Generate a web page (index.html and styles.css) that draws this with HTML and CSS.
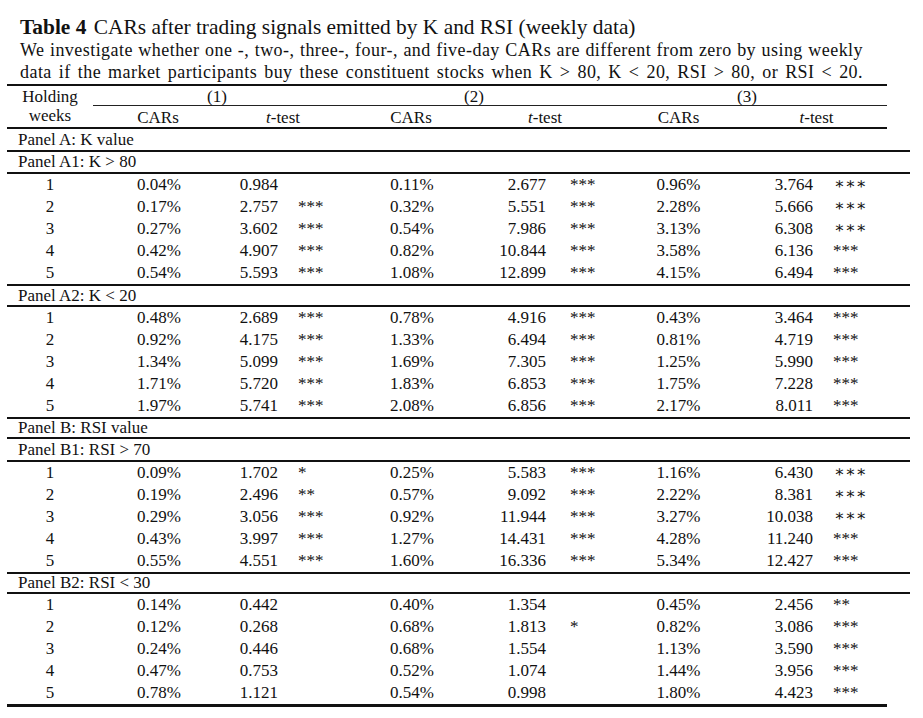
FILE: index.html
```html
<!DOCTYPE html>
<html>
<head>
<meta charset="utf-8">
<link rel="stylesheet" href="styles.css">
</head>
<body>
<div class="page">
  <div class="caption">
    <div class="title"><b class="tnum">Table 4</b> CARs after trading signals emitted by K and RSI (weekly data)</div>
    <div class="desc">We investigate whether one -, two-, three-, four-, and five-day CARs are different from zero by using weekly data if the market participants buy these constituent stocks when K &gt; 80, K &lt; 20, RSI &gt; 80, or RSI &lt; 20.</div>
  </div>

  <div class="table">
    <div class="head">
      <div class="stubhead">Holding<br>weeks</div>
      <div class="groups">
        <div class="g1">(1)</div>
        <div class="g2">(2)</div>
        <div class="g3">(3)</div>
      </div>
      <div class="subs">
        <div class="s1">CARs</div>
        <div class="s2"><i>t</i>-test</div>
        <div class="s3">CARs</div>
        <div class="s4"><i>t</i>-test</div>
        <div class="s5">CARs</div>
        <div class="s6"><i>t</i>-test</div>
      </div>
    </div>

    <div class="panel h21">Panel A: K value</div>
    <div class="panel h20">Panel A1: K &gt; 80</div>
    <div class="group">
      <div class="row"><span>1</span><span>0.04%</span><span class="tv">0.984</span><span class="st"></span><span>0.11%</span><span class="tv">2.677</span><span class="st st2">***</span><span>0.96%</span><span class="tv">3.764</span><span class="st st3"><span class="ast">∗∗∗</span></span></div>
      <div class="row"><span>2</span><span>0.17%</span><span class="tv">2.757</span><span class="st">***</span><span>0.32%</span><span class="tv">5.551</span><span class="st st2">***</span><span>2.28%</span><span class="tv">5.666</span><span class="st st3"><span class="ast">∗∗∗</span></span></div>
      <div class="row"><span>3</span><span>0.27%</span><span class="tv">3.602</span><span class="st">***</span><span>0.54%</span><span class="tv">7.986</span><span class="st st2">***</span><span>3.13%</span><span class="tv">6.308</span><span class="st st3"><span class="ast">∗∗∗</span></span></div>
      <div class="row"><span>4</span><span>0.42%</span><span class="tv">4.907</span><span class="st">***</span><span>0.82%</span><span class="tv">10.844</span><span class="st st2">***</span><span>3.58%</span><span class="tv">6.136</span><span class="st st3">***</span></div>
      <div class="row"><span>5</span><span>0.54%</span><span class="tv">5.593</span><span class="st">***</span><span>1.08%</span><span class="tv">12.899</span><span class="st st2">***</span><span>4.15%</span><span class="tv">6.494</span><span class="st st3">***</span></div>
    </div>
    <div class="panel h19">Panel A2: K &lt; 20</div>
    <div class="group">
      <div class="row"><span>1</span><span>0.48%</span><span class="tv">2.689</span><span class="st">***</span><span>0.78%</span><span class="tv">4.916</span><span class="st st2">***</span><span>0.43%</span><span class="tv">3.464</span><span class="st st3">***</span></div>
      <div class="row"><span>2</span><span>0.92%</span><span class="tv">4.175</span><span class="st">***</span><span>1.33%</span><span class="tv">6.494</span><span class="st st2">***</span><span>0.81%</span><span class="tv">4.719</span><span class="st st3">***</span></div>
      <div class="row"><span>3</span><span>1.34%</span><span class="tv">5.099</span><span class="st">***</span><span>1.69%</span><span class="tv">7.305</span><span class="st st2">***</span><span>1.25%</span><span class="tv">5.990</span><span class="st st3">***</span></div>
      <div class="row"><span>4</span><span>1.71%</span><span class="tv">5.720</span><span class="st">***</span><span>1.83%</span><span class="tv">6.853</span><span class="st st2">***</span><span>1.75%</span><span class="tv">7.228</span><span class="st st3">***</span></div>
      <div class="row"><span>5</span><span>1.97%</span><span class="tv">5.741</span><span class="st">***</span><span>2.08%</span><span class="tv">6.856</span><span class="st st2">***</span><span>2.17%</span><span class="tv">8.011</span><span class="st st3">***</span></div>
    </div>
    <div class="panel h18">Panel B: RSI value</div>
    <div class="panel h21">Panel B1: RSI &gt; 70</div>
    <div class="group">
      <div class="row"><span>1</span><span>0.09%</span><span class="tv">1.702</span><span class="st">*</span><span>0.25%</span><span class="tv">5.583</span><span class="st st2">***</span><span>1.16%</span><span class="tv">6.430</span><span class="st st3"><span class="ast">∗∗∗</span></span></div>
      <div class="row"><span>2</span><span>0.19%</span><span class="tv">2.496</span><span class="st">**</span><span>0.57%</span><span class="tv">9.092</span><span class="st st2">***</span><span>2.22%</span><span class="tv">8.381</span><span class="st st3"><span class="ast">∗∗∗</span></span></div>
      <div class="row"><span>3</span><span>0.29%</span><span class="tv">3.056</span><span class="st">***</span><span>0.92%</span><span class="tv">11.944</span><span class="st st2">***</span><span>3.27%</span><span class="tv">10.038</span><span class="st st3"><span class="ast">∗∗∗</span></span></div>
      <div class="row"><span>4</span><span>0.43%</span><span class="tv">3.997</span><span class="st">***</span><span>1.27%</span><span class="tv">14.431</span><span class="st st2">***</span><span>4.28%</span><span class="tv">11.240</span><span class="st st3">***</span></div>
      <div class="row"><span>5</span><span>0.55%</span><span class="tv">4.551</span><span class="st">***</span><span>1.60%</span><span class="tv">16.336</span><span class="st st2">***</span><span>5.34%</span><span class="tv">12.427</span><span class="st st3">***</span></div>
    </div>
    <div class="panel h18">Panel B2: RSI &lt; 30</div>
    <div class="group last">
      <div class="row"><span>1</span><span>0.14%</span><span class="tv">0.442</span><span class="st"></span><span>0.40%</span><span class="tv">1.354</span><span class="st st2"></span><span>0.45%</span><span class="tv">2.456</span><span class="st st3">**</span></div>
      <div class="row"><span>2</span><span>0.12%</span><span class="tv">0.268</span><span class="st"></span><span>0.68%</span><span class="tv">1.813</span><span class="st st2">*</span><span>0.82%</span><span class="tv">3.086</span><span class="st st3">***</span></div>
      <div class="row"><span>3</span><span>0.24%</span><span class="tv">0.446</span><span class="st"></span><span>0.68%</span><span class="tv">1.554</span><span class="st st2"></span><span>1.13%</span><span class="tv">3.590</span><span class="st st3">***</span></div>
      <div class="row"><span>4</span><span>0.47%</span><span class="tv">0.753</span><span class="st"></span><span>0.52%</span><span class="tv">1.074</span><span class="st st2"></span><span>1.44%</span><span class="tv">3.956</span><span class="st st3">***</span></div>
      <div class="row"><span>5</span><span>0.78%</span><span class="tv">1.121</span><span class="st"></span><span>0.54%</span><span class="tv">0.998</span><span class="st st2"></span><span>1.80%</span><span class="tv">4.423</span><span class="st st3">***</span></div>
    </div>
  </div>
</div>
</body>
</html>
```

FILE: styles.css
```css
html, body {
  margin: 0;
  padding: 0;
  background: #ffffff;
}
body {
  font-family: "Liberation Serif", "Times New Roman", serif;
  color: #111;
}
.page {
  padding: 15px 0 0 7px;
  width: 903px;
}
.caption {
  padding-left: 13px;
}
.title {
  font-size: 21.4px;
  line-height: 24px;
  white-space: nowrap;
}
.tnum {
  margin-right: 2px;
}
.desc {
  font-size: 18px;
  line-height: 22px;
  letter-spacing: 0.45px;
  width: 843px;
  text-align: justify;
  text-align-last: justify;
}
.table {
  margin-top: 1px;
  width: 903px;
  font-size: 17px;
}
.head {
  width: 880px;
  border-top: 2px solid #111;
  border-bottom: 2px solid #111;
  display: grid;
  grid-template-columns: 86px 1fr;
  grid-template-rows: 20px 21px;
}
.stubhead {
  grid-row: 1 / 3;
  grid-column: 1;
  text-align: center;
  line-height: 19px;
  padding-top: 1px;
}
.groups {
  grid-row: 1;
  grid-column: 2;
  display: grid;
  grid-template-columns: 248px 266px 280px;
  border-bottom: 1px solid #222;
  line-height: 17px;
  padding-top: 2px;
  text-align: center;
}
.subs {
  grid-row: 2;
  grid-column: 2;
  display: grid;
  grid-template-columns: 130px 120px 136px 132px 135px 141px;
  line-height: 19px;
  padding-top: 2px;
  text-align: center;
}
.panel {
  padding-left: 11px;
  border-bottom: 2px solid #111;
}
.h21 { height: 21px; line-height: 21px; }
.h20 { height: 20px; line-height: 20px; }
.h19 { height: 19px; line-height: 19px; }
.h18 { height: 18px; line-height: 18px; }
.group {
  border-bottom: 2px solid #111;
}
.group.last {
  width: 880px;
  border-bottom: 3px solid #111;
}
.row {
  display: grid;
  grid-template-columns: 86px 132px 53px 72px 124px 72px 66px 133px 68px 97px;
  height: 22px;
  line-height: 22px;
  text-align: center;
  white-space: nowrap;
}
.row .tv {
  text-align: right;
}
.row .st {
  text-align: left;
  padding-left: 20px;
}
.row .st2 {
  padding-left: 24px;
}
.row .st3 {
  padding-left: 20px;
}
.ast {
  font-family: "DejaVu Serif", serif;
  font-size: 16px;
  letter-spacing: 0;
  margin-left: 1px;
  position: relative;
  top: -1px;
}
```
